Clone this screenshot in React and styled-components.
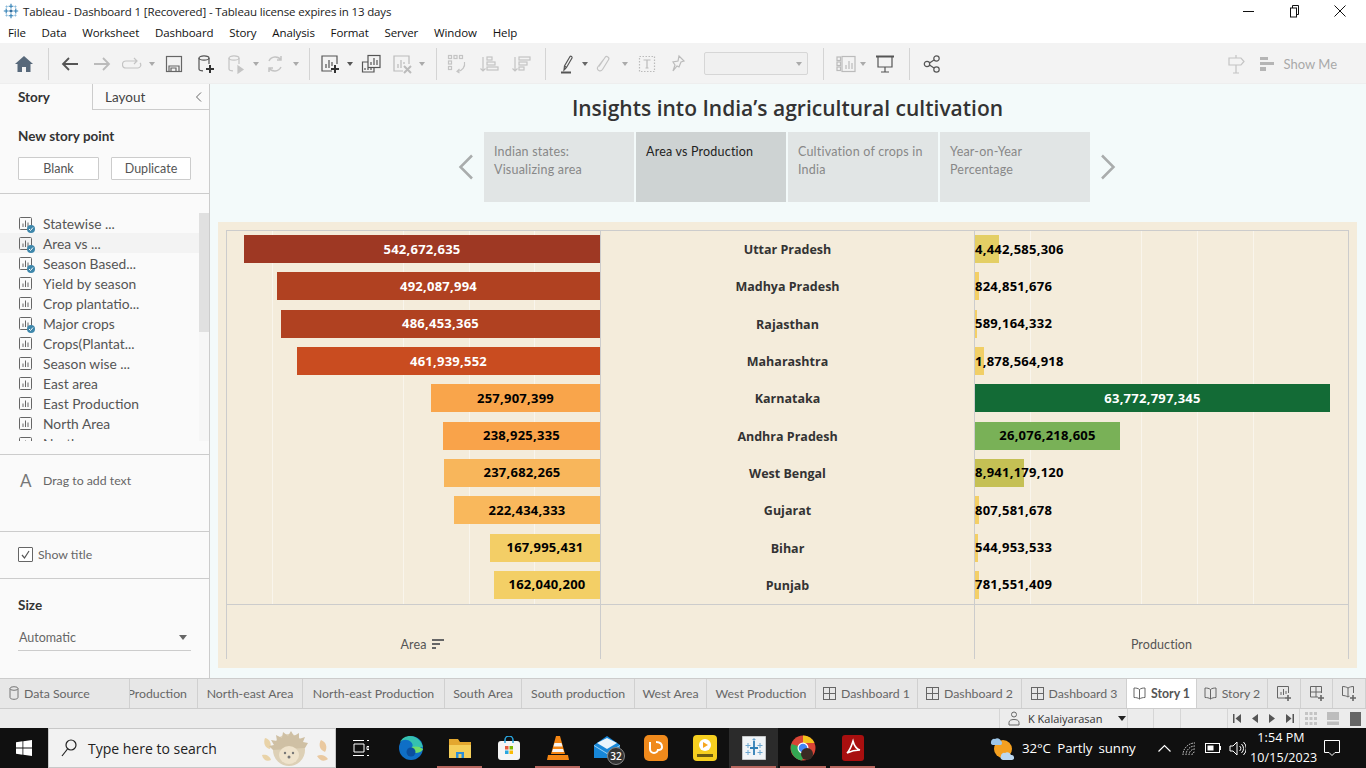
import React from "react";
import styled, { createGlobalStyle } from "styled-components";

const ui = `"Open Sans", "Noto Sans", sans-serif`;
const tb = `"Lato", "Open Sans", sans-serif`;

const Global = createGlobalStyle`
  html, body { margin: 0; padding: 0; background: #fff; }
  body { font-family: ${ui}; overflow: hidden; }
  * { box-sizing: border-box; }
  svg { display: block; flex: none; }
`;

const Page = styled.div`
  width: 1366px; height: 768px; display: flex; flex-direction: column; overflow: hidden; background: #fff;
`;
const TitleBar = styled.div`
  height: 22px; display: flex; align-items: center; padding-left: 3px; background: #fff;
`;
const TitleText = styled.div`
  font-size: 11.5px; color: #222; margin-left: 4px; letter-spacing: -0.15px; white-space: nowrap;
`;
const WinButtons = styled.div`
  margin-left: auto; display: flex; height: 22px; align-items: center; padding-right: 3px;
`;
const WinButton = styled.div`
  width: 46px; display: flex; justify-content: center;
`;
const MenuBar = styled.div`
  height: 21px; display: flex; align-items: center; gap: 15.8px; padding-left: 8px; font-size: 11.5px; color: #111; letter-spacing: -0.1px;
`;
const Toolbar = styled.div`
  height: 41px; background: #f3f3f3; display: flex; align-items: center; border-bottom: 1px solid #eee;
  padding: 1px 0 0 8px;
`;
const Slot = styled.div`
  width: ${p => p.$w}px; height: 32px; display: flex; align-items: center; justify-content: center; flex: none;
`;
const Sep = styled.div`
  width: ${p => p.$w}px; height: 32px; flex: none; display: flex; justify-content: center;
  &::after { content: ""; width: 1px; height: 100%; background: #d4d4d4; }
`;
const Combo = styled.div`
  width: 104px; height: 23px; flex: none; margin-left: 12px; border: 1px solid #d6d6d6; border-radius: 2px; background: #f0f0f0;
  display: flex; align-items: center; justify-content: flex-end; padding-right: 5px;
`;
const Caret = styled.div`
  width: 0; height: 0; border-left: ${p => p.$s || 3}px solid transparent; border-right: ${p => p.$s || 3}px solid transparent;
  border-top: ${p => (p.$s || 3) + 1}px solid ${p => p.$c || "#aaa"};
`;
const ToolRight = styled.div`
  margin-left: auto; display: flex; align-items: center; padding-right: 29px;
`;
const ShowMe = styled.div`
  font-size: 13px; color: #a9a9a9; margin-left: 4px; font-family: ${tb};
`;

const Main = styled.div`
  height: 594px; display: flex;
`;
const Side = styled.aside`
  width: 210px; flex: none; background: #fafafa; border-right: 1px solid #ccc; display: flex; flex-direction: column;
  font-family: ${tb}; color: #555;
`;
const SideTabs = styled.div`
  height: 26px; display: flex; flex: none;
`;
const SideTabA = styled.div`
  width: 92px; padding-left: 18px; font-size: 13.5px; font-weight: 700; color: #333; line-height: 26px;
`;
const SideTabB = styled.div`
  flex: 1; border-left: 1px solid #ccc; border-bottom: 1px solid #ccc; padding: 1px 6px 0 12px; font-size: 13.5px; color: #444;
  display: flex; align-items: center; justify-content: space-between;
`;
const Section = styled.div`
  height: ${p => p.$h}px; flex: none; border-bottom: ${p => (p.$nb ? "none" : "1px solid #ccc")}; padding: ${p => p.$p || "0 18px"};
`;
const SideHead = styled.div`
  font-size: 13.5px; font-weight: 700; color: #333; line-height: 18px;
`;
const BtnRow = styled.div`
  display: flex; justify-content: space-between; margin-top: 12px; width: 173px;
`;
const Btn = styled.div`
  width: ${p => p.$w}px; height: 23px; background: #fff; border: 1px solid #ccc; border-radius: 1px; font-size: 12.5px; color: #555;
  display: flex; align-items: center; justify-content: center;
`;
const ListWrap = styled.div`
  display: flex; height: 228px; margin-top: 19px;
`;
const List = styled.div`
  flex: 1; overflow: hidden;
`;
const ListRow = styled.div`
  height: 20px; display: flex; align-items: center; padding-left: 19px; gap: 11px; font-size: 13.8px; color: #555; white-space: nowrap;
  background: ${p => (p.$on ? "#f3f3f3" : "transparent")};
`;
const SheetWrap = styled.div`
  position: relative; width: 13px; height: 13px; flex: none;
`;
const Badge = styled.div`
  position: absolute; right: -3px; bottom: -3px; width: 8px; height: 8px; border-radius: 50%; background: #3e87ab;
  display: flex; align-items: center; justify-content: center;
`;
const Scroll = styled.div`
  width: 10px; background: #f6f6f6; flex: none;
`;
const Thumb = styled.div`
  height: 119px; background: #e0e0e0;
`;
const TextAdd = styled.div`
  display: flex; align-items: center; gap: 10px; margin-top: 15px; font-size: 12.3px; color: #666;
`;
const BigA = styled.span`
  font-size: 17px; color: #777; width: 13px; margin-left: 2px;
`;
const CheckRow = styled.div`
  display: flex; align-items: center; gap: 5px; margin-top: 15px; font-size: 12.3px; color: #666;
`;
const Check = styled.div`
  width: 15px; height: 15px; border: 1px solid #666; border-radius: 1px; background: #fff; display: flex; align-items: center; justify-content: center;
`;
const Select = styled.div`
  margin-top: 13px; height: 24px; width: 173px; border-bottom: 1px solid #ccc; font-size: 12.5px; color: #666;
  display: flex; align-items: center; justify-content: space-between; padding: 0 4px 2px 1px;
`;

const Story = styled.main`
  flex: 1; background: #f3fafa; display: flex; flex-direction: column; padding: 0 9px 10px 8px;
`;
const StoryTitle = styled.div`
  height: 48px; display: flex; align-items: center; justify-content: center; font-family: ${ui}; font-weight: 600; font-size: 21px; color: #333;
  white-space: nowrap; padding-bottom: 1px;
`;
const StoryNav = styled.div`
  height: 70px; display: flex; justify-content: center; align-items: center; gap: 2px; padding-right: 1px;
`;
const NavArrow = styled.div`
  width: 32px; display: flex; justify-content: center;
`;
const StoryPoint = styled.div`
  width: 150px; height: 70px; padding: 11px 10px; font-family: ${tb}; font-size: 12.5px; line-height: 18px; letter-spacing: 0.2px;
  background: ${p => (p.$on ? "#ced3d3" : "#e1e5e5")}; color: ${p => (p.$on ? "#222" : "#888")};
`;
const ChartPanel = styled.section`
  margin-top: 20px; flex: 1; background: #f4ecdb; padding: 8px 8px 9px;
`;
const Frame = styled.div`
  height: 100%; border: 1px solid #ccc; border-bottom: none; display: grid; grid-template-columns: 374px 374px 1fr; grid-template-rows: 373px 1fr;
`;
const Plot = styled.div`
  display: grid; grid-template-rows: repeat(10, 1fr); border-right: ${p => (p.$last ? "none" : "1px solid #ccc")};
  background-image: ${p => p.$grid || "none"};
`;
const AxisCell = styled.div`
  border-top: 1px solid #ccc; border-right: ${p => (p.$last ? "none" : "1px solid #ccc")};
  display: flex; align-items: flex-end; justify-content: center; padding-bottom: 7px; font-family: ${tb}; font-size: 12.5px; letter-spacing: 0.1px; color: #555;
`;
const SortMark = styled.span`
  margin-left: 6px; margin-right: -18px; display: flex; margin-bottom: 2px;
`;
const BarRow = styled.div`
  display: flex; align-items: center; justify-content: ${p => (p.$end ? "flex-end" : "flex-start")}; min-width: 0;
`;
const Bar = styled.div`
  height: 28px; flex: none; margin-bottom: 1px; background: ${p => p.$bg}; color: ${p => (p.$light ? "#fff" : "#000")};
  display: flex; align-items: center; justify-content: ${p => (p.$center ? "center" : "flex-start")}; white-space: nowrap;
  font-family: ${ui}; font-weight: 700; font-size: 13px; letter-spacing: 0.25px; padding-bottom: 1px;
`;
const StateName = styled.div`
  display: flex; align-items: center; justify-content: center; font-family: ${ui}; font-weight: 700; font-size: 12.5px; color: #333;
`;

const TabStrip = styled.div`
  height: 31px; background: #e7e7e7; border-top: 1px solid #ccc; border-bottom: 1px solid #ccc; display: flex;
  font-family: ${tb}; font-size: 12.3px; color: #666;
`;
const SheetTab = styled.div`
  width: ${p => p.$w}px; flex: none; border-right: 1px solid #d0d0d0; display: flex; align-items: center; gap: 5px;
  justify-content: ${p => p.$j || "center"}; padding: ${p => p.$pad || "0 0 1px"}; overflow: hidden; white-space: nowrap;
  background: ${p => (p.$on ? "#fff" : "transparent")}; font-weight: ${p => (p.$on ? 700 : 400)};
  color: ${p => (p.$on ? "#555" : "#666")};
`;
const Status = styled.div`
  height: 19px; background: #ececec; display: flex; justify-content: flex-end; font-size: 11px; color: #333;
`;
const StatCell = styled.div`
  width: ${p => p.$w}px; flex: none; border-left: 1px solid #d6d6d6; display: flex; align-items: center;
  justify-content: ${p => p.$j || "center"}; gap: ${p => p.$g || 0}px; padding-left: ${p => p.$pl || 0}px; white-space: nowrap;
`;
const UserCaret = styled.span`
  margin-left: 8px;
`;
const Taskbar = styled.div`
  height: 40px; background: #101010; display: flex; align-items: stretch; color: #fff;
`;
const StartBtn = styled.div`
  width: 48px; display: flex; align-items: center; justify-content: center; flex: none;
`;
const SearchBox = styled.div`
  width: 288px; flex: none; background: #f2f2f2; border: 1px solid #c8c8c8; display: flex; align-items: center; padding-left: 12px; gap: 11px;
  color: #222; font-size: 14px; overflow: hidden;
`;
const Hog = styled.div`
  margin-left: auto; display: flex;
`;
const TaskIcon = styled.div`
  width: ${p => p.$w || 49}px; flex: none; display: flex; align-items: center; justify-content: center; position: relative;
  background: ${p => (p.$active ? "#2b2b2b" : "transparent")};
  &::after { content: ""; position: absolute; left: 2px; right: 2px; bottom: 0; height: 2px; background: ${p => (p.$run ? "#b8675f" : "transparent")}; }
`;
const MailBadge = styled.div`
  position: absolute; right: 6px; bottom: 3px; width: 18px; height: 18px; border-radius: 50%; background: #333; border: 1px solid #888;
  font-size: 10px; color: #fff; display: flex; align-items: center; justify-content: center; font-weight: 600;
`;
const Tray = styled.div`
  margin-left: auto; display: flex; align-items: center; font-size: 13.3px; white-space: nowrap;
`;
const Weather = styled.div`
  margin-left: 8px; letter-spacing: -0.1px; width: 130px; word-spacing: 3px;
`;
const TrayIcon = styled.div`
  width: ${p => p.$w}px; flex: none; display: flex; justify-content: center;
`;
const Clock = styled.div`
  width: 62px; text-align: center; font-size: 12.5px; line-height: 20px; letter-spacing: 0.1px;
`;

const I = ({ s = 20, c = "#555", w = 1.2, children }) => (
  <svg width={s} height={s} viewBox="0 0 20 20" fill="none" stroke={c} strokeWidth={w}>{children}</svg>
);

const LogoMark = ({ s = 16 }) => (
  <svg width={s} height={s} viewBox="0 0 20 20" stroke="#2f7fb5" strokeWidth="1.400">
    <path d="M10 1v6M7 4h6M10 13v6M7 16h6M1 10h6M4 7v6M13 10h6M16 7v6" />
    <path d="M10 8v4M8 10h4" stroke="#1f5f95" strokeWidth="1.600" />
    <path d="M4.500 3v3M3 4.500h3M15.500 3v3M14 4.500h3M4.500 14v3M3 15.500h3M15.500 14v3M14 15.500h3" stroke="#7fb2d6" strokeWidth="1" />
  </svg>
);

const SheetIcon = ({ done }) => (
  <SheetWrap>
    <svg width="13" height="13" viewBox="0 0 13 13" fill="none" stroke="#666">
      <rect x=".5" y=".5" width="12" height="12" rx="1" />
      <path d="M4 10V6.500M6.500 10V3.500M9 10V5.500" />
    </svg>
    {done && (
      <Badge>
        <svg width="6" height="6" viewBox="0 0 6 6" fill="none" stroke="#fff" strokeWidth="1"><path d="M1 3l1.500 1.500L5 1.500" /></svg>
      </Badge>
    )}
  </SheetWrap>
);

const DbIcon = ({ c = "#777" }) => (
  <svg width="10" height="14" viewBox="0 0 10 14" fill="none" stroke={c}>
    <ellipse cx="5" cy="2.500" rx="4" ry="1.800" />
    <path d="M1 2.500v9c0 1 1.800 1.800 4 1.800s4-.8 4-1.800v-9" />
  </svg>
);
const DashIcon = () => (
  <svg width="13" height="13" viewBox="0 0 13 13" fill="none" stroke="#666">
    <rect x=".5" y=".5" width="12" height="12" />
    <path d="M6.500.5v12M.5 6.500h12" />
  </svg>
);
const BookIcon = () => (
  <svg width="13" height="13" viewBox="0 0 13 13" fill="none" stroke="#666">
    <path d="M6.500 2.500C5 1.200 3 1 1 1v9.500c2 0 4 .3 5.500 1.500 1.500-1.200 3.500-1.500 5.500-1.500V1c-2 0-4 .2-5.500 1.500zM6.500 2.500V12" />
  </svg>
);

const menu = ["File", "Data", "Worksheet", "Dashboard", "Story", "Analysis", "Format", "Server", "Window", "Help"];

const sheets = [
  ["Statewise ...", 1], ["Area vs ...", 1], ["Season Based...", 1], ["Yield by season", 0], ["Crop plantatio...", 0],
  ["Major crops", 1], ["Crops(Plantat...", 0], ["Season wise ...", 0], ["East area", 0], ["East Production", 0], ["North Area", 0], ["North", 0],
];

const points = [
  ["Indian states:", "Visualizing area"], ["Area vs Production"], ["Cultivation of crops in", "India"], ["Year-on-Year", "Percentage"],
];

const leftBars = [
  ["542,672,635", 356, "#9e3823", 1], ["492,087,994", 323, "#b04121", 1], ["486,453,365", 319, "#b04121", 1], ["461,939,552", 303, "#c94c20", 1],
  ["257,907,399", 169, "#f9a54b", 0], ["238,925,335", 157, "#f9a34a", 0], ["237,682,265", 156, "#f8b65b", 0], ["222,434,333", 146, "#f9b85c", 0],
  ["167,995,431", 110, "#f3ce66", 0], ["162,040,200", 106, "#f3cf66", 0],
];
const states = ["Uttar Pradesh", "Madhya Pradesh", "Rajasthan", "Maharashtra", "Karnataka", "Andhra Pradesh", "West Bengal", "Gujarat", "Bihar", "Punjab"];
const rightBars = [
  ["4,442,585,306", 24, "#e4cf65", 0, 0], ["824,851,676", 4, "#f3cf66", 0, 0], ["589,164,332", 2, "#f3cf66", 0, 0], ["1,878,564,918", 9, "#f1cf66", 0, 0],
  ["63,772,797,345", 355, "#136b36", 1, 1], ["26,076,218,605", 145, "#79b157", 0, 1], ["8,941,179,120", 49, "#c5c054", 0, 0],
  ["807,581,678", 4, "#f3cf66", 0, 0], ["544,953,533", 3, "#f3cf66", 0, 0], ["781,551,409", 4, "#f3cf66", 0, 0],
];

const tabs = [
  ["Production", 68, "flex-end", "0 10px 1px 0"], ["North-east Area", 105], ["North-east Production", 142], ["South Area", 77], ["South production", 113],
  ["West Area", 72], ["West Production", 109],
];

const gridL = "repeating-linear-gradient(to left, transparent 0 64.8px, #f9f5ec 64.8px 65.6px)";
const gridR = "repeating-linear-gradient(to right, transparent 0 55px, #f9f5ec 55px 55.7px)";

const App = () => (
  <Page>
    <Global />
    <TitleBar>
      <LogoMark />
      <TitleText>Tableau - Dashboard 1 [Recovered] - Tableau license expires in 13 days</TitleText>
      <WinButtons>
        <WinButton><svg width="11" height="11" viewBox="0 0 11 11" stroke="#111"><path d="M0 5.500h11" /></svg></WinButton>
        <WinButton><svg width="11" height="13" viewBox="0 0 11 13" fill="none" stroke="#111"><path d="M3.500 3V.5h6v9H7.500" /><rect x="1.500" y="3" width="6" height="9" /></svg></WinButton>
        <WinButton><svg width="12" height="12" viewBox="0 0 12 12" stroke="#111"><path d="M.5.500l11 11M11.500.5l-11 11" /></svg></WinButton>
      </WinButtons>
    </TitleBar>
    <MenuBar>{menu.map(m => <span key={m}>{m}</span>)}</MenuBar>

    <Toolbar>
      <Slot $w={32}><svg width="18" height="16" viewBox="0 0 18 16" fill="#57687a"><path d="M9 0L0 8h2.500v8H7v-5h4v5h4.500V8H18z" /></svg></Slot>
      <Sep $w={16} />
      <Slot $w={28}><I><path d="M18 10H3M9 4l-6 6 6 6" strokeWidth="1.800" /></I></Slot>
      <Slot $w={36}><I c="#bbb"><path d="M2 10h15M11 4l6 6-6 6" strokeWidth="1.800" /></I></Slot>
      <Slot $w={24}><I c="#c4c4c4"><path d="M14 7H4a3 3 0 0 0 0 7h12a3 3 0 0 0 2-5M12 4l3 3-3 3" /></I></Slot>
      <Slot $w={16}><Caret /></Slot>
      <Slot $w={28}><I c="#666"><rect x="2.500" y="2.500" width="15" height="15" /><path d="M5 17v-5h10v5M7 17v-3h5v3" /></I></Slot>
      <Slot $w={34}>
        <I c="#555"><ellipse cx="9" cy="4" rx="5" ry="2.200" /><path d="M4 4v11c0 1 1.500 1.800 4 1.800M14 4v6" /><path d="M15 11v8M11 15h8" stroke="#333" strokeWidth="2" /></I>
      </Slot>
      <Slot $w={28}>
        <I c="#c4c4c4"><ellipse cx="8" cy="4" rx="5" ry="2.200" /><path d="M3 4v11c0 1 1.500 1.800 4 1.800M13 4v6" /><path d="M12 12l5 3.500-5 3.500z" fill="#c4c4c4" /></I>
      </Slot>
      <Slot $w={12}><Caret /></Slot>
      <Slot $w={26}><I c="#c4c4c4"><path d="M4 7a7 7 0 0 1 12-1M16 13a7 7 0 0 1-12 1M16 2v4h-4M4 18v-4h4" strokeWidth="1.500" /></I></Slot>
      <Slot $w={16}><Caret /></Slot>
      <Sep $w={10} />
      <Slot $w={32}>
        <I c="#555"><path d="M12 17H2V2h15v8" /><path d="M6 14v-4M9 14V6M12 12V8" /><path d="M15 11v8M11 15h8" stroke="#333" strokeWidth="2" /></I>
      </Slot>
      <Slot $w={8}><Caret $c="#555" /></Slot>
      <Slot $w={34}>
        <I c="#555"><rect x="7" y="1.500" width="12" height="12" /><path d="M7 8H1.500v10H13v-4.500M10 11V8M13 11V4M16 11V6M4 16v-2M7 16v-2M10 16v-2" /></I>
      </Slot>
      <Slot $w={28}>
        <I c="#bbb"><path d="M11 17H2V2h15v8" /><path d="M6 14v-4M9 14V6M12 10V8" /><path d="M12 12l7 7M19 12l-7 7" strokeWidth="2" /></I>
      </Slot>
      <Slot $w={12}><Caret /></Slot>
      <Sep $w={16} />
      <Slot $w={26}>
        <I c="#c4c4c4"><rect x="1.500" y="1.500" width="3" height="3" /><rect x="7" y="1.500" width="3" height="3" /><rect x="12.500" y="1.500" width="3" height="3" /><rect x="1.500" y="7" width="3" height="3" /><rect x="1.500" y="12.500" width="3" height="3" /><path d="M17.500 8a8 8 0 0 1-7 9.500M12.500 15l-2.500 2.500 2.500 1.500" /></I>
      </Slot>
      <Slot $w={38}><I c="#c4c4c4"><path d="M4 3v14M1.500 14.500L4 17l2.500-2.500" /><rect x="8" y="3" width="5" height="3" /><rect x="8" y="8" width="8" height="3" /><rect x="8" y="13" width="11" height="3" /></I></Slot>
      <Slot $w={26}><I c="#c4c4c4"><path d="M4 3v14M1.500 14.500L4 17l2.500-2.500" /><rect x="8" y="3" width="11" height="3" /><rect x="8" y="8" width="8" height="3" /><rect x="8" y="13" width="5" height="3" /></I></Slot>
      <Sep $w={22} />
      <Slot $w={24}>
        <I c="#555"><path d="M7 15l-1 1 .5-4L12 2.500c.8-.8 2.500.2 2 1.500L8.500 13.500zM6.500 12l2 1.500" /><path d="M3 18.500h10" strokeWidth="2" /></I>
      </Slot>
      <Slot $w={10}><Caret $c="#666" /></Slot>
      <Slot $w={28}><I c="#c4c4c4"><path d="M5 12.500L11 3.500c1.500-2.200 5-.2 3.500 2.300L8.500 15.500c-2 3-6.500.5-4.700-2.500L9.500 5.500" /></I></Slot>
      <Slot $w={14}><Caret /></Slot>
      <Slot $w={30}><I c="#bbb"><rect x="2.500" y="2.500" width="15" height="15" strokeDasharray="1.500 1.500" /><path d="M6.500 6h7M10 6v8M8.500 14h3" /></I></Slot>
      <Slot $w={30}><I c="#bbb"><path d="M12 2l5 5-3 1-2 5-2-1-4 5 2-6-2-3 5-1z" /></I></Slot>
      <Combo><Caret /></Combo>
      <Sep $w={30} />
      <Slot $w={16}><I c="#bbb" s={20}><rect x="1" y="3" width="3.500" height="3.500" /><rect x="1" y="8" width="3.500" height="3.500" /><rect x="1" y="13" width="3.500" height="3.500" /><rect x="6" y="2.500" width="13" height="15" /><path d="M10 15v-4M13 15V7M16 15v-6" /></I></Slot>
      <Slot $w={18}><Caret /></Slot>
      <Slot $w={26}><I c="#555" s={20}><path d="M1 2.500h18" strokeWidth="2" /><path d="M3 3v10h14V3M10 13v5M6 18h8" /></I></Slot>
      <Sep $w={22} />
      <Slot $w={24}><I c="#555"><circle cx="14.500" cy="4.500" r="2.700" /><circle cx="14.500" cy="15.500" r="2.700" /><circle cx="5" cy="10" r="2.700" /><path d="M7.500 9l4.500-3M7.500 11l4.500 3" /></I></Slot>
      <ToolRight>
        <Slot $w={40}><I c="#c4c4c4"><path d="M10 1v3M3 4h12l3 3.500L15 11H3zM10 11v8M7 19h6" /></I></Slot>
        <Slot $w={24}>
          <svg width="16" height="14" viewBox="0 0 16 14" fill="#b5b5b5"><path d="M0 0h8v3H0zM0 5h14v3H0zM0 10h6v4H0z" /></svg>
        </Slot>
        <ShowMe>Show Me</ShowMe>
      </ToolRight>
    </Toolbar>

    <Main>
      <Side>
        <SideTabs>
          <SideTabA>Story</SideTabA>
          <SideTabB>Layout
            <svg width="8" height="10" viewBox="0 0 8 10" fill="none" stroke="#666"><path d="M6 .5L1.500 5 6 9.500" /></svg>
          </SideTabB>
        </SideTabs>
        <Section $h={84} $p="17px 18px 0">
          <SideHead>New story point</SideHead>
          <BtnRow><Btn $w={81}>Blank</Btn><Btn $w={80}>Duplicate</Btn></BtnRow>
        </Section>
        <Section $h={261} $p="0">
          <ListWrap>
            <List>
              {sheets.map(([t, d], i) => (
                <ListRow key={t} $on={i === 1}><SheetIcon done={!!d} />{t}</ListRow>
              ))}
            </List>
            <Scroll><Thumb /></Scroll>
          </ListWrap>
        </Section>
        <Section $h={77}>
          <TextAdd><BigA>A</BigA>Drag to add text</TextAdd>
        </Section>
        <Section $h={47}>
          <CheckRow>
            <Check><svg width="11" height="11" viewBox="0 0 11 11" fill="none" stroke="#555" strokeWidth="1.200"><path d="M2 6l2.500 3L9 2" /></svg></Check>
            Show title
          </CheckRow>
        </Section>
        <Section $h={99} $nb $p="17px 18px 0">
          <SideHead>Size</SideHead>
          <Select>Automatic<Caret $s={4} $c="#666" /></Select>
        </Section>
      </Side>

      <Story>
        <StoryTitle>Insights into India’s agricultural cultivation</StoryTitle>
        <StoryNav>
          <NavArrow><svg width="16" height="26" viewBox="0 0 16 26" fill="none" stroke="#a9acac" strokeWidth="2.500"><path d="M14 1.500L2.500 13 14 24.500" /></svg></NavArrow>
          {points.map((p, i) => (
            <StoryPoint key={p[0]} $on={i === 1}>{p.map(l => <div key={l}>{l}</div>)}</StoryPoint>
          ))}
          <NavArrow><svg width="16" height="26" viewBox="0 0 16 26" fill="none" stroke="#a9acac" strokeWidth="2.500"><path d="M2 1.500L13.500 13 2 24.500" /></svg></NavArrow>
        </StoryNav>
        <ChartPanel>
          <Frame>
            <Plot $grid={gridL}>
              {leftBars.map(([v, w, c, l]) => (
                <BarRow key={v} $end><Bar $bg={c} $light={!!l} $center style={{ width: w }}>{v}</Bar></BarRow>
              ))}
            </Plot>
            <Plot>{states.map(s => <StateName key={s}>{s}</StateName>)}</Plot>
            <Plot $last $grid={gridR}>
              {rightBars.map(([v, w, c, l, ce]) => (
                <BarRow key={v}><Bar $bg={c} $light={!!l} $center={!!ce} style={{ width: w }}>{v}</Bar></BarRow>
              ))}
            </Plot>
            <AxisCell>Area
              <SortMark><svg width="12" height="11" viewBox="0 0 12 11" fill="#666"><path d="M0 0h12v2H0zM0 4h8v2H0zM0 8h4v2H0z" /></svg></SortMark>
            </AxisCell>
            <AxisCell />
            <AxisCell $last>Production</AxisCell>
          </Frame>
        </ChartPanel>
      </Story>
    </Main>

    <TabStrip>
      <SheetTab $w={130} $j="flex-start" $pad="0 0 1px 9px"><DbIcon />Data Source</SheetTab>
      {tabs.map(([t, w, j, pad]) => <SheetTab key={t} $w={w} $j={j} $pad={pad}>{t}</SheetTab>)}
      <SheetTab $w={102}><DashIcon />Dashboard 1</SheetTab>
      <SheetTab $w={104}><DashIcon />Dashboard 2</SheetTab>
      <SheetTab $w={105}><DashIcon />Dashboard 3</SheetTab>
      <SheetTab $w={70} $on><BookIcon />Story 1</SheetTab>
      <SheetTab $w={71}><BookIcon />Story 2</SheetTab>
      <SheetTab $w={33}><svg width="16" height="16" viewBox="0 0 16 16" fill="none" stroke="#666"><path d="M9 13H1.500V1.500h11V8M5 10V7M7.500 10V4M10 9V6" /><path d="M12 10v6M9 13h6" strokeWidth="1.600" /></svg></SheetTab>
      <SheetTab $w={32}><svg width="16" height="16" viewBox="0 0 16 16" fill="none" stroke="#666"><path d="M9 12H1.500V1.500h11V8M7 1.500V12M1.500 7h11" /><path d="M12 10v6M9 13h6" strokeWidth="1.600" /></svg></SheetTab>
      <SheetTab $w={33}><svg width="16" height="16" viewBox="0 0 16 16" fill="none" stroke="#666"><path d="M7 3C5.500 2 3.500 1.500 1.500 1.500v9c2 0 4 .5 5.500 1.500 .5-.4 1-.6 1.500-.8M7 3c1.500-1 3.500-1.500 5.500-1.500V8M7 3v9" /><path d="M12 10v6M9 13h6" strokeWidth="1.600" /></svg></SheetTab>
    </TabStrip>

    <Status>
      <StatCell $w={128} $j="flex-start" $g={8} $pl={8}>
        <svg width="12" height="15" viewBox="0 0 12 15" fill="none" stroke="#666"><circle cx="6" cy="3.500" r="2.500" /><path d="M1 14v-2.500C1 9.500 3 8.500 6 8.500s5 1 5 3V14z" /></svg>
        K Kalaiyarasan
        <UserCaret><Caret $s={4} $c="#222" /></UserCaret>
      </StatCell>
      <StatCell $w={26} />
      <StatCell $w={27} />
      <StatCell $w={47} />
      <StatCell $w={72} $j="space-around">
        <svg width="8" height="9" viewBox="0 0 8 9" fill="#555"><path d="M0 0h1.500v9H0zM8 0v9L2.500 4.500z" /></svg>
        <svg width="6" height="9" viewBox="0 0 6 9" fill="#555"><path d="M6 0v9L0 4.500z" /></svg>
        <svg width="6" height="9" viewBox="0 0 6 9" fill="#555"><path d="M0 0v9l6-4.500z" /></svg>
        <svg width="8" height="9" viewBox="0 0 8 9" fill="#555"><path d="M8 0H6.500v9H8zM0 0v9l5.500-4.500z" /></svg>
      </StatCell>
      <StatCell $w={67} $j="space-around">
        <svg width="12" height="13" viewBox="0 0 12 13" fill="#c4c4c4"><path d="M0 0h3v3H0zM4.500 0h3v3h-3zM9 0h3v3H9zM0 5h3v3H0zM4.500 5h3v3h-3zM9 5h3v3H9zM0 10h3v3H0zM4.500 10h3v3h-3zM9 10h3v3H9z" /></svg>
        <svg width="12" height="13" viewBox="0 0 12 13" fill="#bdbdbd"><path d="M0 0h12v8H0zM0 9.500h12V13H0z" /></svg>
        <svg width="11" height="14" viewBox="0 0 11 14" fill="#666"><path d="M0 0h11v14H0z" /></svg>
      </StatCell>
    </Status>

    <Taskbar>
      <StartBtn><svg width="16" height="16" viewBox="0 0 16 16" fill="#fff"><path d="M0 2.200l6.500-.9v6.300H0zM7.300 1.200L16 0v7.600H7.300zM0 8.400h6.500v6.300L0 13.800zM7.300 8.400H16V16l-8.700-1.200z" /></svg></StartBtn>
      <SearchBox>
        <svg width="16" height="18" viewBox="0 0 16 18" fill="none" stroke="#222" strokeWidth="1.200"><circle cx="10" cy="6" r="5" /><path d="M6.500 10L1 17" /></svg>
        Type here to search
        <Hog>
          <svg width="76" height="40" viewBox="0 0 76 40">
            <path d="M6 10c5 1 7 6 5 11-5-1-7-6-5-11zM3 27c4-1 8 1 9 5-4 2-8 0-9-5z" fill="#e9d3a8" />
            <path d="M62 12c5 2 7 7 4 12-5-2-7-7-4-12zM58 28c4-2 8-1 11 3-4 3-8 2-11-3z" fill="#eac9a0" />
            <g transform="translate(-8 0)">
              <circle cx="38" cy="22" r="16" fill="#ddd0b6" />
              <path d="M22 22l-4-4 5-1-3-5 6 1-1-6 6 3 1-6 5 4 3-5 3 5 5-3 0 6 6-2-2 5 5 1-3 5" fill="#cfc0a4" />
              <ellipse cx="38" cy="27" rx="10" ry="9" fill="#efe3cc" />
              <circle cx="34" cy="25" r="1.200" fill="#777" />
              <circle cx="42" cy="25" r="1.200" fill="#777" />
              <circle cx="38" cy="29" r="1.500" fill="#777" />
            </g>
          </svg>
        </Hog>
      </SearchBox>
      <TaskIcon $w={50}>
        <svg width="16" height="16" viewBox="0 0 16 16" fill="none" stroke="#fff"><path d="M0 .5h11M0 15.500h11M1 4h10v8H1zM14 .5h2M14 6.500h2v3h-2zM14 15.500h2" /></svg>
      </TaskIcon>
      <TaskIcon>
        <svg width="24" height="24" viewBox="0 0 24 24">
          <circle cx="12" cy="12" r="12" fill="#0f6fc6" />
          <path d="M24 13C24 6 18 0 11 0 7 0 3 2 1 6c3-3 8-3 11 0 2 2 2 4 1 5h11z" fill="#35c1b0" />
          <path d="M24 13c0 1-3 4-7 4-3 0-5-2-5-4 0-1 1-2 1-2 3-1 8-1 11 2z" fill="#6fdc6a" />
          <circle cx="12" cy="16" r="4.500" fill="#0b4f9e" />
        </svg>
      </TaskIcon>
      <TaskIcon $run>
        <svg width="24" height="22" viewBox="0 0 24 22"><path d="M1 2h9l2 3h11v4H1z" fill="#e3a72f" /><path d="M1 8h22v13H1z" fill="#f5cf5a" /><path d="M8 15h8v6H8z" fill="#2d8fd8" /><path d="M10.500 17h3v4h-3z" fill="#f5cf5a" /></svg>
      </TaskIcon>
      <TaskIcon>
        <svg width="22" height="24" viewBox="0 0 22 24"><rect x="0" y="5" width="22" height="19" rx="3" fill="#f5f5f5" /><path d="M7 7V4a4 4 0 0 1 8 0v3" stroke="#29a7e0" strokeWidth="1.500" fill="none" /><path d="M7 10h3.500v3.500H7z" fill="#e55b3c" /><path d="M11.500 10H15v3.500h-3.500z" fill="#7fba00" /><path d="M7 14.500h3.500V18H7z" fill="#29a7e0" /><path d="M11.500 14.500H15V18h-3.500z" fill="#fbbc05" /></svg>
      </TaskIcon>
      <TaskIcon $run>
        <svg width="22" height="26" viewBox="0 0 22 26"><path d="M9 1h4l5 18H4z" fill="#f58613" /><path d="M7.500 8h7l1 3.500h-9zM6 14h10l1 3H5z" fill="#f5f5f5" /><path d="M1 20h20l1 5H0z" fill="#f58613" /></svg>
      </TaskIcon>
      <TaskIcon>
        <svg width="26" height="24" viewBox="0 0 26 24"><path d="M0 9L13 0l13 9v13H0z" fill="#1787d8" /><path d="M0 9l13 8 13-8v1L13 18 0 10z" fill="#9fd4f5" /><path d="M3 7l10-5 10 5-10 6z" fill="#e8f4fc" /></svg>
        <MailBadge>32</MailBadge>
      </TaskIcon>
      <TaskIcon>
        <svg width="24" height="26" viewBox="0 0 24 26"><rect width="24" height="26" rx="5" fill="#f08a1c" /><path d="M6 7v7a4 4 0 0 0 8 0M12 7c4 0 6 2 6 5 0 2-2 3-4 3" stroke="#fff" strokeWidth="2" fill="none" /></svg>
      </TaskIcon>
      <TaskIcon>
        <svg width="24" height="26" viewBox="0 0 24 26"><rect width="24" height="26" rx="4" fill="#f6cf1f" /><circle cx="12" cy="10" r="6" fill="#fff" /><path d="M10 7l5 3-5 3z" fill="#f6a71f" /><path d="M4 19h16v3H4z" fill="#6a5a10" /></svg>
      </TaskIcon>
      <TaskIcon $active $run>
        <svg width="24" height="24" viewBox="0 0 24 24"><rect width="24" height="24" fill="#f0f4f7" stroke="#999" /><path d="M12 5v14M8 12h8" stroke="#2f7fb5" strokeWidth="1.800" /><path d="M6 7v5M3.500 9.500h5M18 7v5M15.500 9.500h5M6 14v5M3.500 16.500h5M18 14v5M15.500 16.500h5M12 2v3M10.500 3.500h3" stroke="#6ba6cf" /></svg>
      </TaskIcon>
      <TaskIcon $w={50} $run>
        <svg width="26" height="26" viewBox="0 0 26 26"><circle cx="13" cy="13" r="12.500" fill="#d94436" /><path d="M13 .5A12.500 12.500 0 0 1 24.500 8H13z" fill="#f3c21b" /><path d="M1.500 9A12.500 12.500 0 0 0 12 25.500L17 14z" fill="#34a853" /><circle cx="13" cy="13" r="5.500" fill="#fff" /><circle cx="13" cy="13" r="4.300" fill="#4285f4" /><circle cx="17" cy="19" r="6" fill="#3a2a24" /></svg>
      </TaskIcon>
      <TaskIcon $run>
        <svg width="22" height="26" viewBox="0 0 22 26"><rect width="22" height="26" rx="3" fill="#a80f0f" /><path d="M11 6c-1 3-2 8-6 12 4-2 8-3 13-3-4-1-6-5-7-9z" fill="none" stroke="#fff" strokeWidth="1.600" /></svg>
      </TaskIcon>
      <Tray>
        <svg width="24" height="26" viewBox="0 0 24 26">
          <circle cx="13" cy="14" r="9" fill="#f4a020" />
          <path d="M1 7a3 3 0 0 1 4-3 4 4 0 0 1 6 2 2.500 2.500 0 0 1 0 4H3a2.500 2.500 0 0 1-2-3z" fill="#9ec6e8" />
          <path d="M11 21a3 3 0 0 1 4-3 4 4 0 0 1 6 2 2.500 2.500 0 0 1 1 5H13a2.500 2.500 0 0 1-2-4z" fill="#bcd8f0" />
        </svg>
        <Weather>32°C Partly sunny</Weather>
        <TrayIcon $w={24}><svg width="13" height="8" viewBox="0 0 13 8" fill="none" stroke="#fff" strokeWidth="1.200"><path d="M.5 7.500l6-6 6 6" /></svg></TrayIcon>
        <TrayIcon $w={26}><svg width="16" height="15" viewBox="0 0 16 15" fill="none" stroke="#ddd"><path d="M2 14A12 12 0 0 1 14 2M5 14a9 9 0 0 1 9-9M8 14a6 6 0 0 1 6-6M11 14a3 3 0 0 1 3-3" strokeDasharray="1.500 1" /></svg></TrayIcon>
        <TrayIcon $w={22}><svg width="17" height="10" viewBox="0 0 17 10" fill="none" stroke="#fff"><rect x=".5" y=".5" width="14" height="9" /><path d="M15.500 3v4" /><rect x="2.500" y="2.500" width="6" height="5" fill="#fff" stroke="none" /></svg></TrayIcon>
        <TrayIcon $w={26}><svg width="17" height="15" viewBox="0 0 17 15" fill="none" stroke="#fff"><path d="M1 5h3l4-4v13l-4-4H1zM10.500 5a3 3 0 0 1 0 5M12.500 3a6 6 0 0 1 0 9M14.500 1a9 9 0 0 1 0 13" /></svg></TrayIcon>
        <Clock><div>1:54 PM</div><div>10/15/2023</div></Clock>
        <TrayIcon $w={40}><svg width="16" height="16" viewBox="0 0 16 16" fill="none" stroke="#fff"><path d="M.5.500h15v12H11l-3 3-3-3H.5z" /></svg></TrayIcon>
        <TrayIcon $w={14} />
      </Tray>
    </Taskbar>
  </Page>
);

export default App;
